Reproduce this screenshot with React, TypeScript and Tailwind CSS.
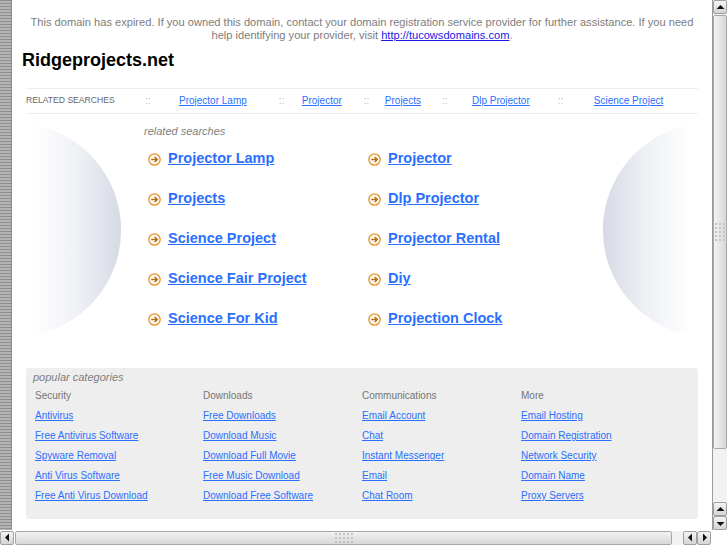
import React from "react";

const barLinks = [
  { label: "Projector Lamp", sep: "w-[34px]", gap: "w-[32px]" },
  { label: "Projector", sep: "w-[23px]", gap: "w-[22px]" },
  { label: "Projects", sep: "w-[21px]", gap: "w-[21px]" },
  { label: "Dlp Projector", sep: "w-[30px]", gap: "w-[28px]" },
  { label: "Science Project", sep: "w-[36px]", gap: "w-0" },
];

const relatedRows = [
  ["Projector Lamp", "Projector"],
  ["Projects", "Dlp Projector"],
  ["Science Project", "Projector Rental"],
  ["Science Fair Project", "Diy"],
  ["Science For Kid", "Projection Clock"],
];

const categories = [
  {
    title: "Security",
    width: "w-[168px]",
    links: ["Antivirus", "Free Antivirus Software", "Spyware Removal", "Anti Virus Software", "Free Anti Virus Download"],
  },
  {
    title: "Downloads",
    width: "w-[159px]",
    links: ["Free Downloads", "Download Music", "Download Full Movie", "Free Music Download", "Download Free Software"],
  },
  {
    title: "Communications",
    width: "w-[159px]",
    links: ["Email Account", "Chat", "Instant Messenger", "Email", "Chat Room"],
  },
  {
    title: "More",
    width: "w-[150px]",
    links: ["Email Hosting", "Domain Registration", "Network Security", "Domain Name", "Proxy Servers"],
  },
];

const ArrowIcon = () => (
  <svg width="13" height="13" viewBox="0 0 13 13" className="mt-[1px] shrink-0">
    <circle cx="6.5" cy="6.5" r="5.7" fill="#fdf8f0" stroke="#e8922a" strokeWidth="1.3" />
    <path d="M3.2 6.5H9M6.7 4 9.2 6.5 6.7 9" fill="none" stroke="#b96f14" strokeWidth="1.6" />
  </svg>
);

const Sphere = ({ side }: { side: "left" | "right" }) => {
  const id = "fade-" + side;
  return (
    <svg width="90" height="214" viewBox="0 0 90 214" className="shrink-0">
      <defs>
        <linearGradient id={id} x1={side === "left" ? "0" : "1"} x2={side === "left" ? "1" : "0"} y1="0" y2="0">
          <stop offset="0" stopColor="#ffffff" />
          <stop offset="0.5" stopColor="#eff1f6" />
          <stop offset="1" stopColor="#d6dae4" />
        </linearGradient>
      </defs>
      {side === "left" ? (
        <path d="M0 1.5A107 107 0 0 1 0 212.5Z" fill={`url(#${id})`} />
      ) : (
        <path d="M90 1.5A107 107 0 0 0 90 212.5Z" fill={`url(#${id})`} />
      )}
    </svg>
  );
};

const Triangle = ({ dir }: { dir: "up" | "down" | "left" | "right" }) => {
  const points = {
    up: "0.5,6 4.5,2 8.5,6",
    down: "0.5,3 4.5,7 8.5,3",
    left: "6,0.5 2,4.5 6,8.5",
    right: "3,0.5 7,4.5 3,8.5",
  }[dir];
  return (
    <svg width="9" height="9" viewBox="0 0 9 9">
      <polygon points={points} fill="#111111" />
    </svg>
  );
};

const ScrollButton = ({ dir }: { dir: "up" | "down" | "left" | "right" }) => (
  <div className="flex h-[14px] w-[14px] shrink-0 items-center justify-center rounded-[2px] border border-[#a0a0a0] bg-gradient-to-b from-[#f4f4f4] to-[#d4d4d4]">
    <Triangle dir={dir} />
  </div>
);

// dots on a scrollbar thumb: long side follows the thumb
const Grip = ({ vertical }: { vertical?: boolean }) => (
  <div className={vertical ? "grid grid-cols-[repeat(3,2px)] gap-[2px]" : "grid grid-cols-[repeat(5,2px)] gap-[2px]"}>
    {Array.from({ length: 15 }).map((_, i) => (
      <div key={i} className="h-[2px] w-[2px] bg-[#c4c4c4]" />
    ))}
  </div>
);

const App = () => {
  return (
    <div className="flex h-[545px] w-[727px] flex-col overflow-hidden bg-white font-['Liberation_Sans',Arial,sans-serif]">
      <div className="flex h-[530px] min-h-0">
        {/* left edge strip */}
        <div className="w-[12px] shrink-0 border-r border-[#8c8c8c] bg-[repeating-linear-gradient(180deg,#8f8f8f_0,#8f8f8f_1px,#b4b4b4_1px,#b4b4b4_3px)]" />

        {/* page */}
        <div className="flex w-[700px] shrink-0 flex-col">
          <p className="mx-auto mt-[16px] w-[680px] text-center text-[11.1px] leading-[13px] text-[#7d7d7d]">
            This domain has expired. If you owned this domain, contact your domain registration service provider for further assistance. If you need help identifying your provider, visit{" "}
            <a href="#" className="text-[#1a1ae6] underline">
              http://tucowsdomains.com
            </a>
            .
          </p>

          <h1 className="ml-[10px] mt-[6px] text-[18px] font-bold leading-[24px] text-black">Ridgeprojects.net</h1>

          {/* top link bar */}
          <div className="ml-[14px] mt-[16px] flex h-[26px] w-[672px] items-center border-y border-[#eeeeee] pb-[2px] text-[10px]">
            <span className="w-[119px] shrink-0 text-[8.6px] text-[#666666]">RELATED SEARCHES</span>
            {barLinks.map((item) => (
              <React.Fragment key={item.label}>
                <span className={`${item.sep} shrink-0 text-[#bbbbbb]`}>::</span>
                <a href="#" className="shrink-0 text-[#2a6fff] underline">
                  {item.label}
                </a>
                <span className={`${item.gap} shrink-0`} />
              </React.Fragment>
            ))}
          </div>

          {/* spheres and related searches */}
          <div className="mt-[9px] flex h-[214px]">
            <div className="ml-[20px]">
              <Sphere side="left" />
            </div>
            <div className="ml-[22px] w-[458px] shrink-0">
              <div className="text-[11px] italic leading-[16px] text-[#808080]">related searches</div>
              <div className="mt-[9px] flex flex-col gap-[18px]">
                {relatedRows.map((row) => (
                  <div key={row[0]} className="flex h-[22px] items-center">
                    {row.map((label) => (
                      <div key={label} className="flex w-[220px] items-center pl-[4px]">
                        <ArrowIcon />
                        <a href="#" className="ml-[7px] text-[14.5px] font-bold text-[#2a6fff] underline">
                          {label}
                        </a>
                      </div>
                    ))}
                  </div>
                ))}
              </div>
            </div>
            <Sphere side="right" />
          </div>

          {/* popular categories */}
          <div className="ml-[14px] mt-[31px] h-[151px] w-[672px] rounded-[3px] bg-[#eeeeee]">
            <div className="pl-[7px] pt-[2px] text-[11px] italic leading-[14px] text-[#808080]">popular categories</div>
            <div className="mt-[5px] flex pl-[9px]">
              {categories.map((col) => (
                <div key={col.title} className={`${col.width} shrink-0`}>
                  <div className="h-[20px] text-[10px] leading-[14px] text-[#757575]">{col.title}</div>
                  {col.links.map((link) => (
                    <div key={link} className="h-[20px] text-[10px] leading-[14px]">
                      <a href="#" className="text-[#2a6fff] underline">
                        {link}
                      </a>
                    </div>
                  ))}
                </div>
              ))}
            </div>
          </div>
        </div>

        {/* vertical scrollbar */}
        <div className="flex w-[15px] shrink-0 flex-col items-center border-l border-[#9a9a9a] bg-[#f2f2f2]">
          <ScrollButton dir="up" />
          <div className="mt-[1px] flex h-[434px] w-[14px] shrink-0 items-center justify-center rounded-[2px] border border-[#a8a8a8] bg-gradient-to-r from-[#f2f2f2] to-[#d8d8d8]">
            <Grip vertical />
          </div>
          <div className="flex-1" />
          <ScrollButton dir="up" />
          <ScrollButton dir="down" />
        </div>
      </div>

      {/* horizontal scrollbar */}
      <div className="flex h-[15px] shrink-0 items-center">
        <ScrollButton dir="left" />
        <div className="ml-[1px] flex h-[14px] w-[657px] shrink-0 items-center justify-center rounded-[2px] border border-[#a8a8a8] bg-gradient-to-b from-[#f2f2f2] to-[#d8d8d8]">
          <Grip />
        </div>
        <div className="h-[14px] w-[11px] shrink-0 bg-[#f2f2f2]" />
        <ScrollButton dir="left" />
        <ScrollButton dir="right" />
      </div>
    </div>
  );
};

export default App;
